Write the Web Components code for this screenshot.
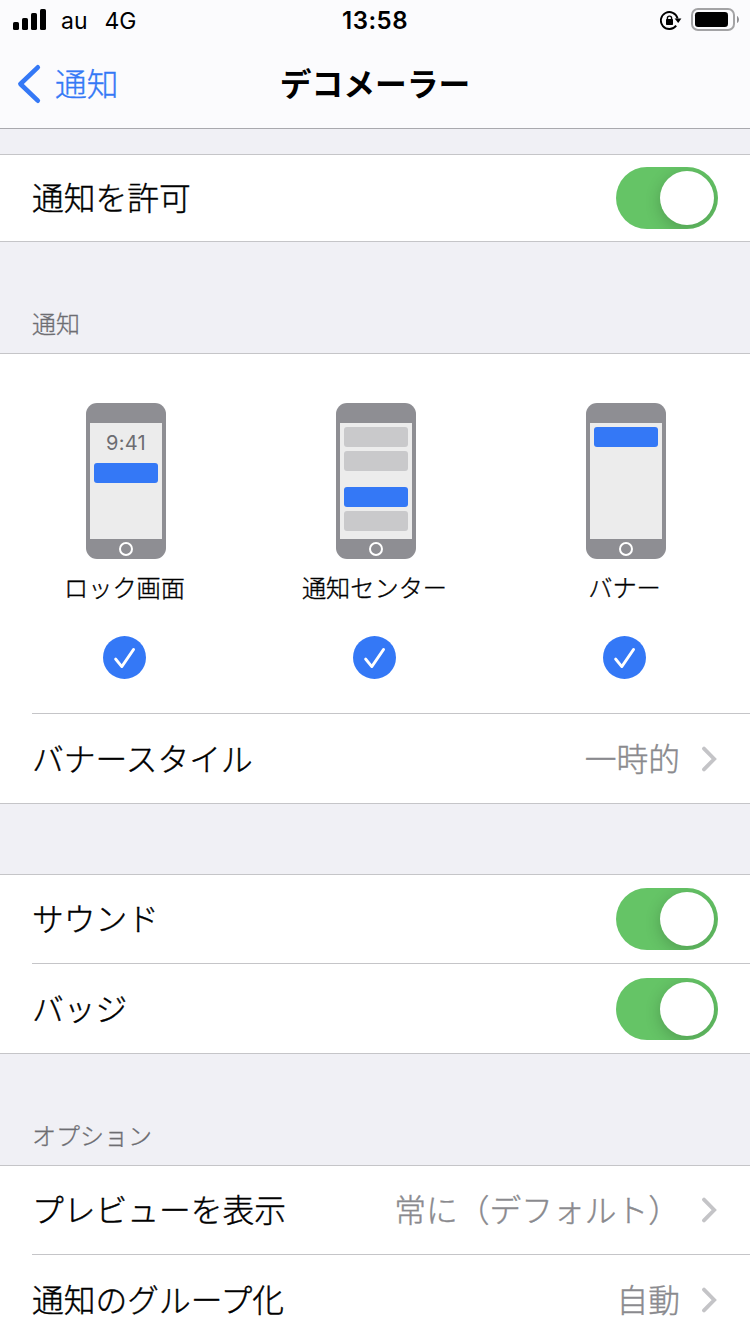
<!DOCTYPE html>
<html lang="ja">
<head>
  <meta charset="utf-8">
  <title>デコメーラー</title>
  <style>
    * {
      box-sizing: border-box;
    }

    body {
      margin: 0;
      width: 750px;
      height: 1334px;
      overflow: hidden;
      background: #f0f0f5;
      color: #000;
      font-family: Inter, "Noto Sans CJK JP", sans-serif;
      --blue: #3478f6;
      --line: #c5c5c8;
    }
  </style>
</head>
<body>
  <status-bar carrier="au" network="4G" time="13:58"></status-bar>
  <nav-bar back="通知">デコメーラー</nav-bar>

  <settings-group style="margin-top: 25px">
    <settings-row style="height: 86px">通知を許可<toggle-switch slot="value"></toggle-switch></settings-row>
  </settings-group>

  <settings-group header="通知" style="margin-top: 111px">
    <alert-picker>
      <alert-option label="ロック画面">
        <phone-clock>9:41</phone-clock>
        <phone-banner active></phone-banner>
      </alert-option>
      <alert-option label="通知センター">
        <phone-banner></phone-banner>
        <phone-banner></phone-banner>
        <phone-banner active style="margin-top: 12px"></phone-banner>
        <phone-banner></phone-banner>
      </alert-option>
      <alert-option label="バナー">
        <phone-banner active></phone-banner>
      </alert-option>
    </alert-picker>
    <settings-row line style="height: 90px">バナースタイル<span slot="value">一時的</span><chevron-icon slot="value"></chevron-icon></settings-row>
  </settings-group>

  <settings-group style="margin-top: 70px">
    <settings-row style="height: 88px">サウンド<toggle-switch slot="value"></toggle-switch></settings-row>
    <settings-row line style="height: 90px">バッジ<toggle-switch slot="value"></toggle-switch></settings-row>
  </settings-group>

  <settings-group header="オプション" style="margin-top: 111px">
    <settings-row style="height: 88px">プレビューを表示<span slot="value">常に（デフォルト）</span><chevron-icon slot="value"></chevron-icon></settings-row>
    <settings-row line style="height: 90px">通知のグループ化<span slot="value">自動</span><chevron-icon slot="value"></chevron-icon></settings-row>
  </settings-group>

  <script>
    class StatusBar extends HTMLElement {
      constructor () {
        super()
        this.shadow = this.attachShadow({ mode: 'open' })
      }

      connectedCallback () {
        this.shadow.innerHTML =
          /* html */`
            <style>
              :host{
                display: grid;
                grid-template-columns: 1fr auto 1fr;
                align-items: center;
                height: 40px;
                padding: 0 11px 0 13px;
                background: #fbfbfd;
                font-size: 23px;
                line-height: 38px;
              }

              .left, .right{
                display: flex;
                align-items: center;
              }

              .left svg{
                margin-right: 14px;
              }

              span, .time{
                padding-top: 2px;
              }

              .network{
                margin-left: 17px;
              }

              .time{
                margin-right: 2px;
                font-size: 24px;
                font-weight: 600;
                letter-spacing: 0.5px;
              }

              .right{
                justify-content: flex-end;
                gap: 8px;
              }
            </style>

            <div class="left">
              <svg width="34" height="40" viewBox="0 0 34 40">
                <rect x="0" y="22" width="6" height="8" rx="1.6"/>
                <rect x="9" y="18" width="6" height="12" rx="1.6"/>
                <rect x="18" y="13" width="6" height="17" rx="1.6"/>
                <rect x="27" y="9" width="6" height="21" rx="1.6"/>
              </svg>
              <span>${this.getAttribute('carrier')}</span>
              <span class="network">${this.getAttribute('network')}</span>
            </div>
            <div class="time">${this.getAttribute('time')}</div>
            <div class="right">
              <svg width="23" height="40" viewBox="0 0 23 40">
                <path d="M16.2 25.6A8.5 8.5 0 1 1 17.6 18.4" fill="none" stroke="#000" stroke-width="1.9"/>
                <path d="M14.6 18.4h6.8l-3.2 4.6z"/>
                <rect x="6" y="19" width="7" height="6" rx="0.8"/>
                <path d="M7.4 19.6v-1.4a2.1 2.1 0 0 1 4.2 0v1.4" fill="none" stroke="#000" stroke-width="1.4"/>
              </svg>
              <svg width="48" height="40" viewBox="0 0 48 40">
                <rect x="1" y="9" width="42" height="21" rx="6" fill="none" stroke="#a3a3a5" stroke-width="2"/>
                <rect x="4" y="12" width="33" height="15" rx="3.2"/>
                <path d="M46 16c2.6 1 2.6 6 0 7z" fill="#8f8f92"/>
              </svg>
            </div>
          `
      }
    }

    class NavBar extends HTMLElement {
      constructor () {
        super()
        this.shadow = this.attachShadow({ mode: 'open' })
      }

      connectedCallback () {
        this.shadow.innerHTML =
          /* html */`
            <style>
              :host{
                box-sizing: border-box;
                display: grid;
                grid-template-columns: 1fr auto 1fr;
                align-items: center;
                height: 89px;
                padding: 0 0 1px 16px;
                background: #fbfbfd;
                border-bottom: 1px solid #a9a9ae;
                font-size: 31.75px;
                line-height: 46px;
              }

              .back{
                display: flex;
                align-items: center;
                gap: 13px;
                color: var(--blue);
                font-weight: 300;
                -webkit-text-stroke: 0.35px;
              }

              .back span, .title{
                padding-top: 2px;
              }

              .title{
                margin-right: 16px;
                font-weight: 700;
              }
            </style>

            <div class="back">
              <svg width="26" height="40" viewBox="0 0 26 40" fill="none" stroke="currentColor" stroke-width="4.6" stroke-linecap="round" stroke-linejoin="round">
                <path d="M21.8 3.3 4.4 20 21.8 36.7"/>
              </svg>
              <span>${this.getAttribute('back')}</span>
            </div>
            <div class="title"><slot></slot></div>
          `
      }
    }

    class SettingsGroup extends HTMLElement {
      constructor () {
        super()
        this.shadow = this.attachShadow({ mode: 'open' })
      }

      connectedCallback () {
        const header = this.getAttribute('header')
        this.shadow.innerHTML =
          /* html */`
            <style>
              :host{
                display: block;
                position: relative;
              }

              .header{
                position: absolute;
                left: 32px;
                bottom: 100%;
                padding-bottom: 10px;
                color: #6d6d72;
                font-size: 24px;
                font-weight: 300;
                line-height: 36px;
                -webkit-text-stroke: 0.3px;
              }

              .rows{
                background: #fff;
                border-top: 1px solid var(--line);
                border-bottom: 1px solid var(--line);
              }
            </style>

            ${header ? `<div class="header">${header}</div>` : ''}
            <div class="rows"><slot></slot></div>
          `
      }
    }

    class SettingsRow extends HTMLElement {
      constructor () {
        super()
        this.shadow = this.attachShadow({ mode: 'open' })
      }

      connectedCallback () {
        this.shadow.innerHTML =
          /* html */`
            <style>
              :host{
                display: flex;
                padding-left: 32px;
                font-size: 31.75px;
                font-weight: 300;
                line-height: 46px;
                -webkit-text-stroke: 0.4px;
              }

              .row{
                box-sizing: border-box;
                flex: 1;
                display: flex;
                align-items: center;
                justify-content: space-between;
                padding-right: 32px;
              }

              :host([line]) .row{
                border-top: 1px solid var(--line);
              }

              .label, ::slotted(span){
                padding-top: 2px;
              }

              .value{
                display: flex;
                align-items: center;
                gap: 21px;
                color: #8a8a8e;
              }
            </style>

            <div class="row">
              <div class="label"><slot></slot></div>
              <div class="value"><slot name="value"></slot></div>
            </div>
          `
      }
    }

    class ToggleSwitch extends HTMLElement {
      constructor () {
        super()
        this.shadow = this.attachShadow({ mode: 'open' })
      }

      connectedCallback () {
        this.shadow.innerHTML =
          /* html */`
            <style>
              :host{
                box-sizing: border-box;
                display: flex;
                justify-content: flex-end;
                width: 102px;
                height: 62px;
                padding: 4px;
                border-radius: 31px;
                background: #65c466;
                overflow: hidden;
              }

              .knob{
                width: 54px;
                height: 54px;
                border-radius: 50%;
                background: #fff;
                box-shadow: 0 4px 16px rgba(0, 0, 0, 0.2);
              }
            </style>

            <div class="knob"></div>
          `
      }
    }

    class ChevronIcon extends HTMLElement {
      constructor () {
        super()
        this.shadow = this.attachShadow({ mode: 'open' })
      }

      connectedCallback () {
        this.shadow.innerHTML =
          /* html */`
            <style>
              :host{
                display: block;
                width: 17px;
                height: 26px;
              }

              svg{
                display: block;
              }
            </style>

            <svg width="17" height="26" viewBox="0 0 17 26" fill="none" stroke="#c4c4c7" stroke-width="3.8">
              <path d="M3 2.6 13.2 13 3 23.4" stroke-linecap="round"/>
            </svg>
          `
      }
    }

    class AlertPicker extends HTMLElement {
      constructor () {
        super()
        this.shadow = this.attachShadow({ mode: 'open' })
      }

      connectedCallback () {
        this.shadow.innerHTML =
          /* html */`
            <style>
              :host{
                box-sizing: border-box;
                display: grid;
                grid-template-columns: repeat(3, 1fr);
                height: 359px;
                padding-top: 49px;
              }
            </style>

            <slot></slot>
          `
      }
    }

    class AlertOption extends HTMLElement {
      constructor () {
        super()
        this.shadow = this.attachShadow({ mode: 'open' })
      }

      connectedCallback () {
        this.shadow.innerHTML =
          /* html */`
            <style>
              :host{
                display: flex;
                flex-direction: column;
                align-items: center;
              }

              .phone{
                box-sizing: border-box;
                width: 80px;
                height: 156px;
                margin-left: 2px;
                padding: 20px 4px 0;
                border-radius: 11px;
                background: #8e8e93;
              }

              .screen{
                box-sizing: border-box;
                display: flex;
                flex-direction: column;
                gap: 4px;
                height: 116px;
                padding: 4px;
                background: #ececec;
              }

              .home{
                box-sizing: border-box;
                width: 14px;
                height: 14px;
                margin: 3px auto 0;
                border: 2px solid #fff;
                border-radius: 50%;
              }

              .label{
                margin: 12px 1px 0 0;
                font-size: 24.2px;
                font-weight: 300;
                line-height: 36px;
                -webkit-text-stroke: 0.35px;
              }

              svg{
                margin: 29px 1px 0 0;
              }
            </style>

            <div class="phone">
              <div class="screen"><slot></slot></div>
              <div class="home"></div>
            </div>
            <div class="label">${this.getAttribute('label')}</div>
            <svg width="43" height="43" viewBox="0 0 43 43">
              <circle cx="21.5" cy="21.5" r="21.5" fill="#3478f6"/>
              <path d="M12.6 23 18.8 30.6 30.6 13.4" fill="none" stroke="#fff" stroke-width="2.8" stroke-linecap="round" stroke-linejoin="round"/>
            </svg>
          `
      }
    }

    class PhoneBanner extends HTMLElement {
      constructor () {
        super()
        this.shadow = this.attachShadow({ mode: 'open' })
      }

      connectedCallback () {
        this.shadow.innerHTML =
          /* html */`
            <style>
              :host{
                display: block;
                height: 20px;
                border-radius: 3px;
                background: #c9c9cb;
              }

              :host([active]){
                background: var(--blue);
              }
            </style>
          `
      }
    }

    class PhoneClock extends HTMLElement {
      constructor () {
        super()
        this.shadow = this.attachShadow({ mode: 'open' })
      }

      connectedCallback () {
        this.shadow.innerHTML =
          /* html */`
            <style>
              :host{
                display: block;
                height: 32px;
                color: #6d6d72;
                font-size: 20px;
                letter-spacing: 0.3px;
                line-height: 32px;
                text-align: center;
              }
            </style>

            <slot></slot>
          `
      }
    }

    customElements.define('status-bar', StatusBar)
    customElements.define('nav-bar', NavBar)
    customElements.define('settings-group', SettingsGroup)
    customElements.define('settings-row', SettingsRow)
    customElements.define('toggle-switch', ToggleSwitch)
    customElements.define('chevron-icon', ChevronIcon)
    customElements.define('alert-picker', AlertPicker)
    customElements.define('alert-option', AlertOption)
    customElements.define('phone-banner', PhoneBanner)
    customElements.define('phone-clock', PhoneClock)
  </script>
</body>
</html>
